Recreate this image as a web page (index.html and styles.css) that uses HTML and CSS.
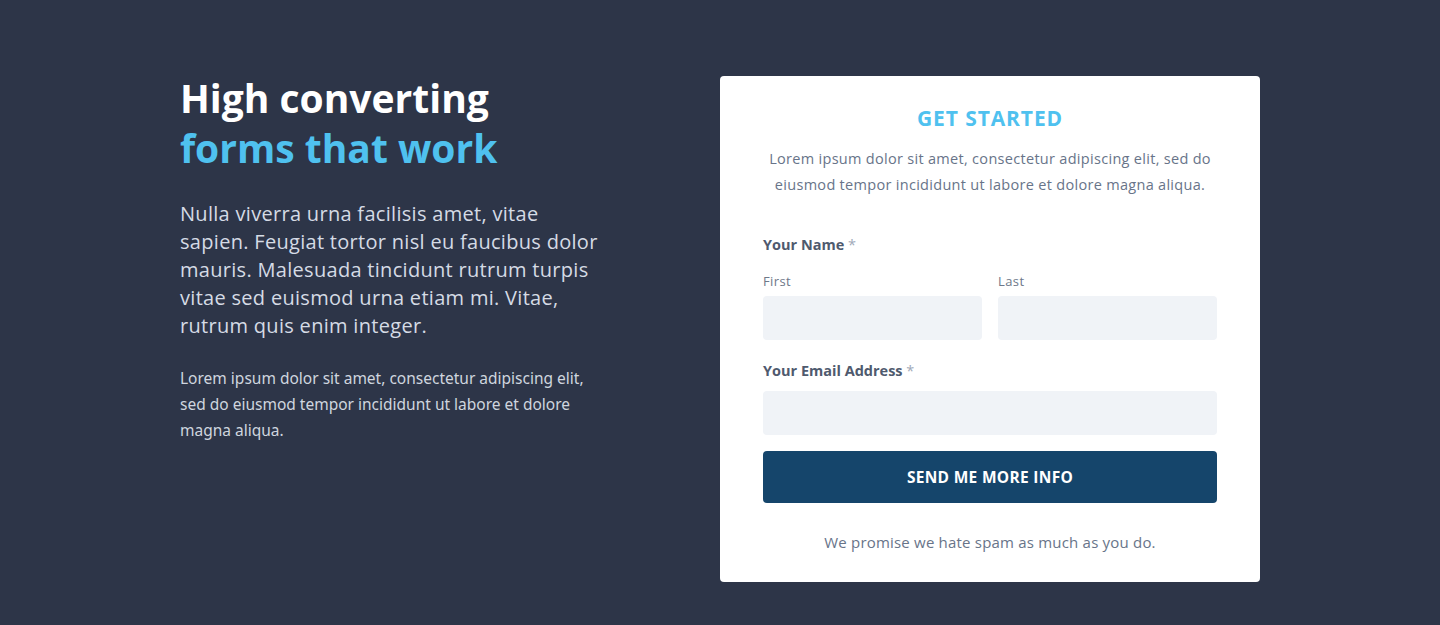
FILE: index.html
```html
<!DOCTYPE html>
<html lang="en">
<head>
<meta charset="utf-8">
<title>High converting forms that work</title>
<link rel="stylesheet" href="styles.css">
</head>
<body>
<section class="hero">
  <div class="intro">
    <h1 class="title"><span class="title-white">High converting</span><span class="title-blue">forms that work</span></h1>
    <p class="lead">Nulla viverra urna facilisis amet, vitae sapien. Feugiat tortor nisl eu faucibus dolor mauris. Malesuada tincidunt rutrum turpis vitae sed euismod urna etiam mi. Vitae, rutrum quis enim integer.</p>
    <p class="small">Lorem ipsum dolor sit amet, consectetur adipiscing elit, sed do eiusmod tempor incididunt ut labore et dolore magna aliqua.</p>
  </div>
  <form class="card">
    <h2 class="card-title">GET STARTED</h2>
    <p class="card-desc">Lorem ipsum dolor sit amet, consectetur adipiscing elit, sed do eiusmod tempor incididunt ut labore et dolore magna aliqua.</p>
    <div class="field">
      <div class="label">Your Name <span class="req">*</span></div>
      <div class="name-row">
        <label class="sub">
          <span class="sub-label">First</span>
          <input class="input" type="text">
        </label>
        <label class="sub">
          <span class="sub-label">Last</span>
          <input class="input" type="text">
        </label>
      </div>
    </div>
    <div class="field email">
      <div class="label">Your Email Address <span class="req">*</span></div>
      <input class="input" type="email">
    </div>
    <button class="btn" type="button">SEND ME MORE INFO</button>
    <p class="note">We promise we hate spam as much as you do.</p>
  </form>
</section>
</body>
</html>
```
FILE: styles.css
```css
* { box-sizing: border-box; }
html, body { margin: 0; padding: 0; }
body {
  background: #2d3548;
  font-family: "Open Sans", "Noto Sans", sans-serif;
  height: 625px;
  overflow: hidden;
}
.hero {
  display: flex;
  padding: 76px 0 0 180px;
  gap: 110px;
}
.intro {
  width: 430px;
}
.title {
  margin: -3px 0 0;
  font-size: 39px;
  line-height: 50px;
  font-weight: 700;
  letter-spacing: 0;
}
.title span { display: block; }
.title-white { color: #ffffff; }
.title-blue { color: #4fc1ef; }
.lead {
  margin: 27px 0 0;
  color: #d5dbe5;
  font-size: 20px;
  line-height: 28px;
  letter-spacing: 0.3px;
}
.small {
  margin: 25px 0 0;
  color: #cfd5df;
  font-family: "Noto Sans", sans-serif;
  font-size: 15.5px;
  line-height: 26px;
}
.card {
  width: 540px;
  background: #ffffff;
  border-radius: 4px;
  padding: 28px 43px 29px;
  display: flex;
  flex-direction: column;
}
.card-title {
  margin: 0;
  text-align: center;
  color: #4fc1ef;
  font-size: 21px;
  line-height: 28px;
  font-weight: 700;
  letter-spacing: 0.9px;
}
.card-desc {
  margin: 14px 0 0;
  text-align: center;
  color: #687489;
  font-size: 14.5px;
  line-height: 26px;
  letter-spacing: 0.3px;
}
.field { margin-top: 36px; }
.field.email { margin-top: 20px; }
.label {
  color: #4f5a6e;
  font-size: 14.5px;
  font-weight: 700;
  line-height: 22px;
}
.req { color: #a0a9b8; font-weight: 400; }
.name-row {
  display: flex;
  gap: 16px;
  margin-top: 16px;
}
.sub { flex: 1; display: flex; flex-direction: column; }
.sub-label {
  color: #6e7889;
  font-size: 13px;
  letter-spacing: 0.4px;
  line-height: 18px;
  margin-bottom: 6px;
}
.input {
  display: block;
  width: 100%;
  height: 44px;
  border: 0;
  border-radius: 4px;
  background: #f0f3f7;
  margin: 0;
}
.email .input { margin-top: 9px; }
.btn {
  margin-top: 16px;
  height: 52px;
  width: 100%;
  border: 0;
  border-radius: 4px;
  background: #15456b;
  color: #ffffff;
  font-family: inherit;
  font-size: 15.5px;
  font-weight: 700;
  letter-spacing: 0.3px;
}
.note {
  margin: 28px 0 0;
  text-align: center;
  color: #687489;
  font-size: 15px;
  line-height: 22px;
  letter-spacing: 0.2px;
}
```
